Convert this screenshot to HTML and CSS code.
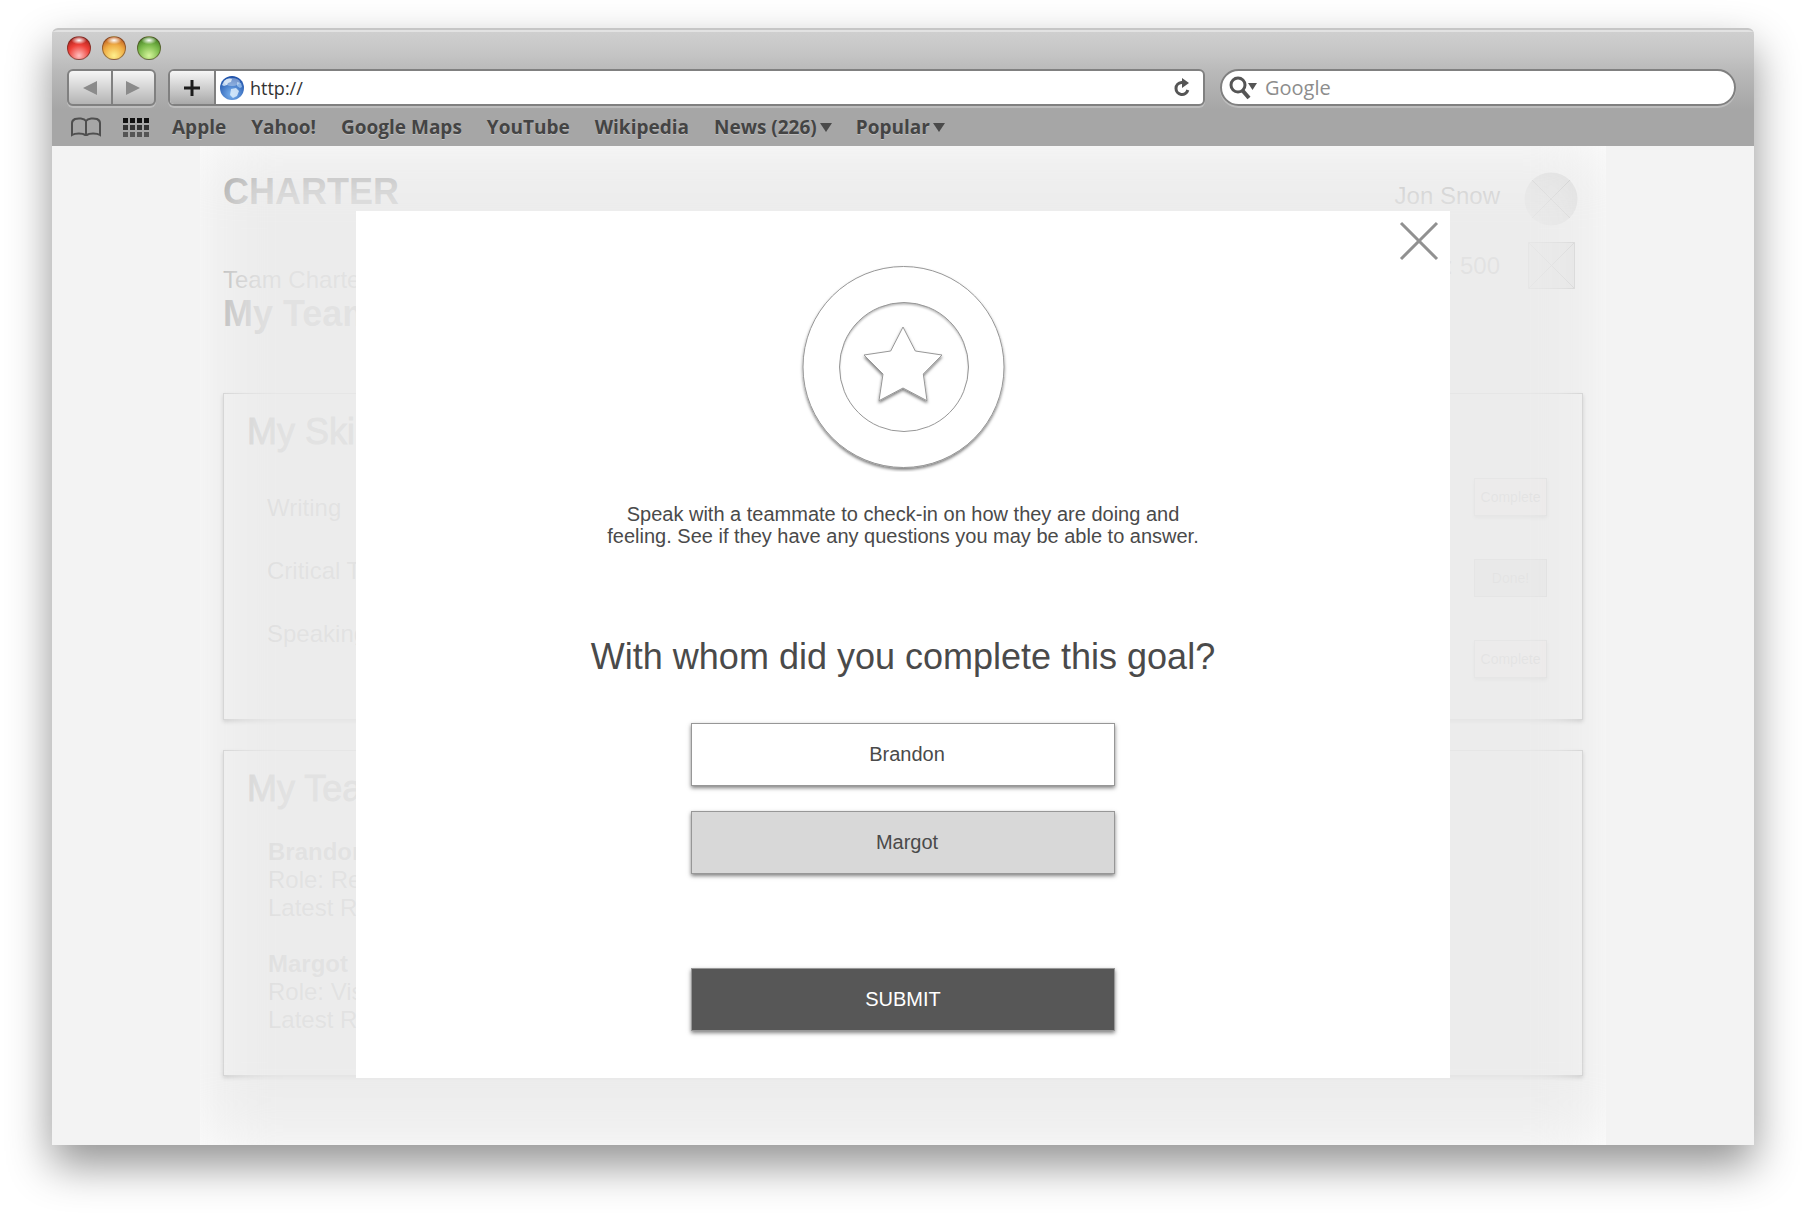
FILE: index.html
```html
<!DOCTYPE html>
<html lang="en">
<head>
    <meta charset="UTF-8">
    <meta name="viewport" content="width=device-width, initial-scale=1.0">
    <title>Charter</title>
    <link rel="stylesheet" href="styles.css">
</head>
<body>
    <div class="window">
        <div class="chrome">
            <div class="lights">
                <span class="light red"></span>
                <span class="light yellow"></span>
                <span class="light green"></span>
            </div>
            <div class="toolbar">
                <div class="nav-buttons">
                    <button aria-label="Back"><svg width="14" height="14" viewBox="0 0 14 14"><path d="M14 0v14L0 7z" fill="#8b8b8b"/></svg></button>
                    <button aria-label="Forward"><svg width="14" height="14" viewBox="0 0 14 14"><path d="M0 0v14l14-7z" fill="#8b8b8b"/></svg></button>
                </div>
                <div class="address">
                    <button class="add" aria-label="Add bookmark"><svg width="18" height="18" viewBox="0 0 18 18"><path d="M9 1v16M1 9h16" stroke="#1c1c1c" stroke-width="3"/></svg></button>
                    <svg class="globe" width="24" height="24" viewBox="0 0 24 24">
                        <defs>
                            <radialGradient id="globe" cx="50%" cy="75%" r="75%">
                                <stop offset="0" stop-color="#7db6f2"/>
                                <stop offset="1" stop-color="#1b4da6"/>
                            </radialGradient>
                        </defs>
                        <circle cx="12" cy="12" r="12" fill="url(#globe)"/>
                        <path d="M4 5c3-3 6-3 8-2l-1 3-3 1-1 2-3 1-2-1zM11 13l5-1 3 3-2 5-4 2-3-3z" fill="#e3f1fd" opacity=".8"/>
                        <path d="M17 6l4 1 1 4-2 1-3-2z" fill="#a9cff5" opacity=".7"/>
                        <ellipse cx="12" cy="6" rx="8" ry="4" fill="#fff" opacity=".35"/>
                    </svg>
                    <input class="url" type="text" value="http://" aria-label="Address">
                    <button class="reload" aria-label="Reload">
                        <svg width="18" height="20" viewBox="0 0 18 20"><path d="M10 4.500H8.500A6 6 0 1 0 14.800 12" fill="none" stroke="#555" stroke-width="3"/><path d="M9 0v10l7-5z" fill="#555"/></svg>
                    </button>
                </div>
                <label class="search">
                    <svg width="30" height="28" viewBox="0 0 30 28"><circle cx="10" cy="11" r="7" fill="none" stroke="#555" stroke-width="3"/><path d="M14.500 16.500L21 24" stroke="#555" stroke-width="4"/><path d="M20 9h9l-4.500 7z" fill="#555"/></svg>
                    <input type="search" placeholder="Google" aria-label="Search Google">
                </label>
            </div>
            <nav class="bookmarks">
                <svg width="30" height="20" viewBox="0 0 30 20"><path d="M15 4C13 1 7 1 4 2C2 3 1 4 1 6v12c3-2 11-2 13 0h2c2-2 10-2 13 0V6c0-2-1-3-3-4C23 1 17 1 15 4zM15 4v14" fill="none" stroke="#4f4f4f" stroke-width="2"/></svg>
                <svg class="grid-icon" width="26" height="19" viewBox="0 0 26 19"><path d="M0 2.500h26" stroke="#111" stroke-width="5" stroke-dasharray="5 2"/><path d="M0 9.500h26" stroke="#333" stroke-width="5" stroke-dasharray="5 2"/><path d="M0 16.500h26" stroke="#555" stroke-width="5" stroke-dasharray="5 2"/></svg>
                <a href="#">Apple</a>
                <a href="#">Yahoo!</a>
                <a href="#">Google Maps</a>
                <a href="#">YouTube</a>
                <a href="#">Wikipedia</a>
                <a href="#">News (226)<span class="caret"></span></a>
                <a href="#">Popular<span class="caret"></span></a>
            </nav>
        </div>

        <div class="viewport">
            <main class="page">
                <header class="row">
                    <h1 class="title">CHARTER</h1>
                    <div class="user">
                        <span class="user-name">Jon Snow</span>
                        <svg width="54" height="54" viewBox="0 0 54 54"><circle cx="27" cy="27" r="26.500" fill="#d0d0d0"/><path d="M8 8l38 38M46 8L8 46" stroke="#979797"/></svg>
                    </div>
                </header>
                <div class="row sub-row">
                    <div class="heading">
                        <p class="label">Team Charter</p>
                        <h2 class="title">My Team</h2>
                    </div>
                    <div class="user">
                        <span>Points: 500</span>
                        <svg width="54" height="48" viewBox="0 0 54 48"><path d="M4.500.5h46v46h-46z" fill="#d8d8d8" stroke="#979797"/><path d="M4.500.5l46 46M50.500.5l-46 46" stroke="#979797"/></svg>
                    </div>
                </div>

                <section class="card">
                    <h2 class="card-title">My Skills</h2>
                    <div class="skills">
                        <ul class="skill-list">
                            <li>Writing</li>
                            <li>Critical Thinking</li>
                            <li>Speaking</li>
                        </ul>
                        <div class="skill-actions">
                            <button class="small-btn">Complete</button>
                            <button class="small-btn done">Done!</button>
                            <button class="small-btn">Complete</button>
                        </div>
                    </div>
                </section>

                <section class="card">
                    <h2 class="card-title">My Team</h2>
                    <div class="members">
                        <p><b>Brandon</b><br>Role: Research<br>Latest Reward</p>
                        <p><b>Margot</b><br>Role: Visuals<br>Latest Reward</p>
                    </div>
                </section>

                <div class="overlay">
                    <div class="modal" role="dialog" aria-modal="true" aria-labelledby="question">
                        <button class="close" aria-label="Close"><svg width="40" height="40" viewBox="0 0 40 40"><path d="M2 2l36 36M38 2L2 38" stroke="#919191" stroke-width="3"/></svg></button>
                        <svg class="badge" width="210" height="210" viewBox="0 0 210 210">
                            <defs>
                                <filter id="drop" x="-20%" y="-20%" width="140%" height="140%">
                                    <feDropShadow dx="0" dy="2" stdDeviation="1.500" flood-color="#000" flood-opacity=".5"/>
                                </filter>
                                <clipPath id="inner"><circle cx="106" cy="105" r="64.500"/></clipPath>
                            </defs>
                            <circle cx="105.500" cy="105" r="100.500" fill="#fff" stroke="#979797" filter="url(#drop)"/>
                            <g clip-path="url(#inner)">
                                <circle cx="106" cy="107" r="66" fill="none" stroke="#000" stroke-opacity=".3" stroke-width="3" filter="blur(1px)"/>
                            </g>
                            <circle cx="106" cy="105" r="64.500" fill="none" stroke="#979797"/>
                            <path d="M105 65l12.300 24 26.700 4-18.700 19 3.700 26.700-24-12.700-24 12.700 4-26.700L66 93l26.700-4z" fill="#fff" stroke="#979797" filter="url(#drop)"/>
                        </svg>
                        <p class="goal">Speak with a teammate to check-in on how they are doing and<br>feeling. See if they have any questions you may be able to answer.</p>
                        <h2 class="question" id="question">With whom did you complete this goal?</h2>
                        <div class="options">
                            <button class="option">Brandon</button>
                            <button class="option selected" aria-pressed="true">Margot</button>
                        </div>
                        <button class="submit">SUBMIT</button>
                    </div>
                </div>
            </main>
        </div>
    </div>
</body>
</html>
```
FILE: styles.css
```css
* {
    box-sizing: border-box;
}
body {
    margin: 0;
    padding: 28px 50px 74px 52px;
    background: #fff;
    color: #4a4a4a;
    font-family: "Liberation Sans", Arial, sans-serif;
    font-size: 24px;
    line-height: 28px;
}
h1, h2, p, ul {
    margin: 0;
    padding: 0;
}
ul {
    list-style: none;
}
button, input {
    margin: 0;
    padding: 0;
    border: none;
    background: none;
    font-family: inherit;
    color: inherit;
}
svg {
    display: block;
    flex: none;
}

/* Browser window */
.window {
    border-radius: 6px 6px 0 0;
    box-shadow: 0 20px 44px rgba(0, 0, 0, 0.43);
}
.chrome {
    height: 118px;
    padding: 6px 18px 0 15px;
    border-top: 2px solid #c6c6c6;
    border-radius: 6px 6px 0 0;
    background: linear-gradient(#e2e2e2 0, #e2e2e2 2px, #cfcfcf 2px, #c5c5c5 24px, #bababa 40px, #a6a6a6 80px);
    font-family: "Open Sans", "Noto Sans", sans-serif;
}
.lights {
    display: flex;
    gap: 11px;
    height: 33px;
}
.light {
    width: 24px;
    height: 24px;
    border: 1px solid rgba(70, 40, 30, 0.5);
    border-radius: 50%;
}
.red {
    background: radial-gradient(ellipse 35% 18% at 50% 15%, #fff, transparent), radial-gradient(circle at 50% 85%, #ffc0c0, #ee4038 50%, #8d1510);
}
.yellow {
    background: radial-gradient(ellipse 35% 18% at 50% 15%, #fff, transparent), radial-gradient(circle at 50% 85%, #fff08c, #efad45 50%, #ac3f13);
}
.green {
    background: radial-gradient(ellipse 35% 18% at 50% 15%, #fff, transparent), radial-gradient(circle at 50% 85%, #d5f59b, #7cba4c 50%, #2f6713);
}
.toolbar {
    display: flex;
    height: 37px;
}
.nav-buttons, .address, .search {
    display: flex;
    align-items: center;
    border: 2px solid #808080;
    border-radius: 6px;
    box-shadow: 0 2px 0 rgba(255, 255, 255, 0.25);
}
.nav-buttons {
    width: 89px;
    margin-right: 12px;
    background: linear-gradient(#f6f6f6, #b4b4b4);
}
.nav-buttons button {
    display: flex;
    flex: 1;
    height: 100%;
    align-items: center;
    justify-content: center;
}
.nav-buttons button:first-child {
    border-right: 2px solid #808080;
}
.address {
    flex: 70 1 0;
    overflow: hidden;
    background: #fff;
}
.add {
    display: flex;
    width: 46px;
    height: 100%;
    align-items: center;
    justify-content: center;
    border-right: 2px solid #808080;
    background: linear-gradient(#f6f6f6, #a9a9a9);
}
.globe {
    margin: 0 6px 0 4px;
}
.url {
    flex: 1;
    min-width: 0;
    color: #333;
    font-size: 18px;
}
.reload {
    margin-right: 12px;
}
.search {
    flex: 35 1 0;
    max-width: 516px;
    margin-left: 15px;
    padding-left: 6px;
    border-radius: 19px;
    background: #fff;
}
.search input {
    flex: 1;
    min-width: 0;
    margin: 0 12px 0 7px;
    font-size: 20px;
}
.search input::placeholder {
    color: #8d8d8d;
}
.bookmarks {
    display: flex;
    align-items: center;
    gap: 25px;
    height: 42px;
    padding-left: 4px;
    white-space: nowrap;
}
.grid-icon {
    margin: 0 -2px 0 -3px;
}
.bookmarks a {
    color: #444;
    font-size: 19px;
    font-weight: bold;
    text-decoration: none;
    text-shadow: 0 1px 0 rgba(255, 255, 255, 0.3);
}
.caret {
    display: inline-block;
    margin: 0 -1px 2px 3px;
    border: 6px solid transparent;
    border-top: 9px solid #4a4a4a;
    border-bottom: none;
}

/* Page behind the modal */
.viewport {
    background: #f3f3f3;
}
.page {
    position: relative;
    max-width: 1406px;
    margin: 0 auto;
    padding: 26px 23px 69px;
    overflow: hidden;
    background: #fff;
}
.row {
    display: flex;
    justify-content: space-between;
    align-items: flex-start;
    padding-right: 5px;
}
.sub-row {
    margin: 16px 0 59px;
}
.heading {
    padding-top: 24px;
}
.title {
    font-size: 36px;
    line-height: 40px;
}
.user {
    display: flex;
    align-items: center;
    gap: 24px;
}
.user-name {
    padding-bottom: 6px;
}
.card {
    padding: 18px 35px 41px 23px;
    border: 1px solid #979797;
    background: #fff;
    box-shadow: 0 2px 4px rgba(0, 0, 0, 0.5);
}
.card + .card {
    margin-top: 30px;
}
.card-title {
    font-size: 36px;
    font-weight: normal;
    line-height: 40px;
    -webkit-text-stroke: 1px #4a4a4a;
}
.skills {
    display: flex;
    justify-content: space-between;
    padding: 26px 0 0 20px;
}
.skill-list {
    display: flex;
    flex-direction: column;
    gap: 35px;
    padding-top: 16px;
}
.skill-actions {
    display: flex;
    flex-direction: column;
    gap: 43px;
}
.small-btn {
    width: 73px;
    height: 38px;
    border: 1px solid #979797;
    background: #ffe6e6;
    box-shadow: 0 2px 4px rgba(0, 0, 0, 0.5);
    color: #666;
    font-size: 14px;
}
.small-btn.done {
    border-color: #888;
    background: #c8c8c8;
    box-shadow: none;
}
.members {
    display: flex;
    flex-direction: column;
    gap: 28px;
    padding: 29px 0 0 21px;
}

/* Modal */
.overlay {
    position: absolute;
    inset: 0;
    display: flex;
    align-items: flex-start;
    justify-content: center;
    padding-top: 65px;
}
.overlay::before {
    content: "";
    position: absolute;
    inset: -7px;
    background: rgba(235, 235, 235, 0.945);
    filter: blur(38px);
}
.modal {
    position: relative;
    display: flex;
    flex-direction: column;
    align-items: center;
    width: 78%;
    max-width: 1094px;
    padding: 51px 20px 47px;
    background: #fff;
    text-align: center;
}
.close {
    position: absolute;
    top: 10px;
    right: 11px;
    cursor: pointer;
}
.goal {
    margin-top: 31px;
    font-size: 20px;
    line-height: 22px;
}
.question {
    margin-top: 90px;
    font-size: 36px;
    font-weight: normal;
    line-height: 40px;
}
.options {
    display: flex;
    flex-direction: column;
    gap: 25px;
    margin: 46px 0 94px;
}
.option, .submit {
    width: 424px;
    height: 63px;
    border: 1px solid #979797;
    background: #fff;
    box-shadow: 0 2px 4px rgba(0, 0, 0, 0.5);
    font-size: 20px;
    cursor: pointer;
}
.option {
    padding-left: 8px;
}
.option.selected {
    background: #d8d8d8;
}
.submit {
    background: #575757;
    color: #fff;
}
```
